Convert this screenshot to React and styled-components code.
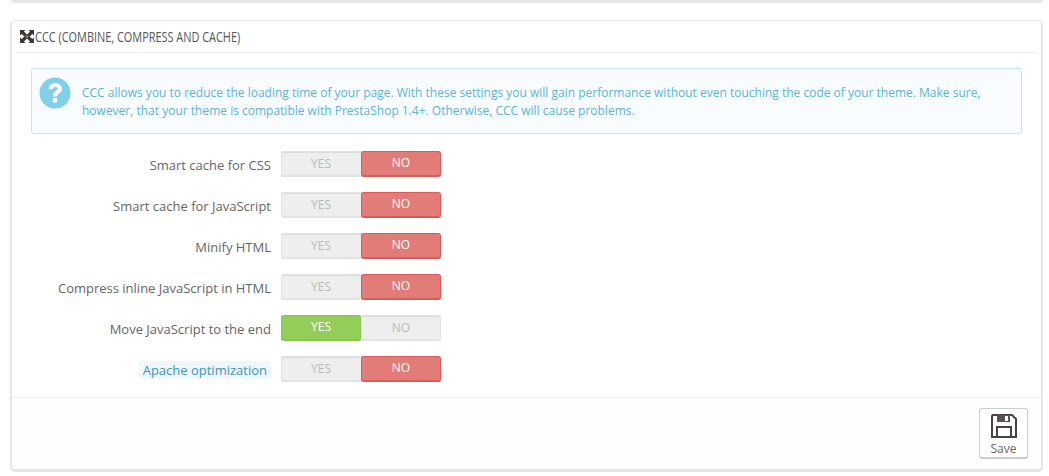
import React from "react";
import styled, { createGlobalStyle } from "styled-components";

const Global = createGlobalStyle`
  html, body {
    margin: 0;
    background: #fff;
    font-family: "Open Sans", "Liberation Sans", sans-serif;
    font-size: 13px;
    color: #666;
  }
`;

const rows = [
  { label: "Smart cache for CSS", on: false },
  { label: "Smart cache for JavaScript", on: false },
  { label: "Minify HTML", on: false },
  { label: "Compress inline JavaScript in HTML", on: false },
  { label: "Move JavaScript to the end", on: true },
  { label: "Apache optimization", on: false, hint: true },
];

const App = () => {
  return (
    <Page>
      <Global />
      <PrevPanel />
      <Panel>
        <Heading>
          <svg width="14" height="13" viewBox="0 0 14 13">
            <path d="M0 0h5.500L4 1.600 7 4.600 10 1.600 8.500 0H14v5.500L12.400 4 9.500 6.500 12.400 9 14 7.500V13H8.500L10 11.400 7 8.400 4 11.400 5.500 13H0V7.500L1.600 9 4.500 6.500 1.600 4 0 5.500z" fill="#3f3835" />
            <path d="M5.500 5.200h3v2.600h-3z" fill="#7d7067" />
          </svg>
          <HeadingText>CCC (COMBINE, COMPRESS AND CACHE)</HeadingText>
        </Heading>
        <Alert>
          <AlertIcon viewBox="0 0 32 32">
            <circle cx="16" cy="16" r="15.500" fill="#81cfe8" />
            <path d="M9.500 12.200c.3-3.800 3-6 6.900-6 3.900 0 6.600 2.300 6.600 5.500 0 2.400-1.300 3.600-2.900 4.700-1.300.9-1.900 1.500-1.900 3h-4.300c-.1-2.600.8-3.900 2.500-5.100 1.300-.9 2.100-1.500 2.100-2.500 0-1.100-.9-1.800-2.100-1.800-1.400 0-2.300.9-2.500 2.300z" fill="#fff" />
            <rect x="13.800" y="21" width="4.300" height="4.500" fill="#fff" />
          </AlertIcon>
          <AlertText>
            CCC allows you to reduce the loading time of your page. With these settings you will gain performance without even touching the code of your theme. Make sure, however, that your theme is compatible with PrestaShop 1.4+. Otherwise, CCC will cause problems.
          </AlertText>
        </Alert>
        <Form>
          {rows.map((row) => (
            <Row key={row.label}>
              <LabelCell>
                <Label $hint={row.hint}>{row.label}</Label>
              </LabelCell>
              <Toggle>
                <Option $active={row.on} $tone="yes">YES</Option>
                <Option $active={!row.on} $tone="no">NO</Option>
              </Toggle>
            </Row>
          ))}
        </Form>
        <Footer>
          <SaveButton>
            <svg width="26" height="24" viewBox="0 0 26 24">
              <path d="M2 1h19l4 4v18H1V2z" fill="none" stroke="#4a4240" strokeWidth="2" />
              <rect x="6" y="1" width="13" height="7" fill="#5a5250" />
              <rect x="14" y="2" width="3" height="5" fill="#fff" />
              <rect x="6" y="13" width="14" height="10" fill="none" stroke="#4a4240" strokeWidth="2" />
            </svg>
            <span>Save</span>
          </SaveButton>
        </Footer>
      </Panel>
    </Page>
  );
};

export default App;

const Page = styled.div`
  width: 1049px;
  height: 476px;
  overflow: hidden;
  padding: 0 6px 0 10px;
  box-sizing: border-box;
`;
const PrevPanel = styled.div`
  height: 3px;
  margin: 0 0 17px 1px;
  background: #e6e6e6;
  border-radius: 0 0 5px 5px;
`;
const Panel = styled.div`
  height: 452px;
  box-sizing: border-box;
  border: 2px solid #e6e6e6;
  border-bottom-width: 3px;
  border-top-width: 1px;
  border-radius: 5px;
  display: flex;
  flex-direction: column;
`;
const Heading = styled.div`
  height: 31px;
  margin: 0 4px;
  padding-left: 4px;
  display: flex;
  align-items: center;
  gap: 1px;
  border-bottom: 1px solid #eee;
  font-size: 14px;
  color: #555;
`;
const HeadingText = styled.span`
  display: inline-block;
  font-weight: 400;
  transform: scaleX(0.78);
  transform-origin: left center;
  white-space: nowrap;
`;
const Alert = styled.div`
  margin: 15px 19px 0 19px;
  height: 66px;
  box-sizing: border-box;
  border: 1px solid #c0e7f2;
  border-radius: 3px;
  background: #f8fcfe;
  display: flex;
  align-items: center;
  padding: 0 20px 0 7px;
  gap: 11px;
`;
const AlertIcon = styled.svg`
  width: 32px;
  height: 32px;
  flex: none;
  margin-top: -16px;
`;
const AlertText = styled.div`
  color: #5db3d8;
  font-size: 12px;
  line-height: 18px;
  margin-top: 1px;
`;
const Form = styled.div`
  margin-top: 17px;
  display: flex;
  flex-direction: column;
  gap: 15px;
`;
const Row = styled.div`
  display: flex;
  align-items: center;
  height: 26px;
`;
const LabelCell = styled.div`
  width: 259px;
  padding-top: 1px;
  text-align: right;
  margin-right: 10px;
`;
const Label = styled.span`
  padding: 0 4px;
  white-space: nowrap;
  border-radius: 3px;
  ${(p) => p.$hint && "background: #eff7fb; color: #3f93b8;"}
  ${(p) => !p.$hint && "padding-right: 0;"}
`;
const Toggle = styled.div`
  display: flex;
  width: 160px;
  height: 26px;
  border-radius: 3px;
  background: #eee;
  box-shadow: inset 0 0 0 1px #e2e2e2, inset 0 2px 0 #dcdcdc, inset 0 -2px 0 #e4e4e4;
`;
const Option = styled.div`
  width: 80px;
  box-sizing: border-box;
  display: flex;
  align-items: center;
  justify-content: center;
  font-size: 12px;
  font-weight: ${(p) => (p.$active ? 500 : 400)};
  color: ${(p) => (p.$active ? "#fff" : "#bbb")};
  border-radius: 3px;
  padding-bottom: 2px;
  ${(p) =>
    p.$active &&
    (p.$tone === "no"
      ? "background: #e27c79; border: 1px solid #dc5b57; border-bottom-width: 2px;"
      : "background: #93ce5a; border: 1px solid #86c64a; border-bottom-width: 2px;")}
`;
const Footer = styled.div`
  margin-top: 15px;
  flex: 1;
  border-top: 1px solid #eee;
  background: #fcfdfe;
  display: flex;
  justify-content: flex-end;
  align-items: flex-start;
  padding: 10px 13px 0 0;
  border-radius: 0 0 5px 5px;
`;
const SaveButton = styled.div`
  width: 49px;
  height: 51px;
  box-sizing: border-box;
  border: 1px solid #ccc;
  border-bottom-width: 2px;
  border-radius: 3px;
  background: #fff;
  display: flex;
  flex-direction: column;
  align-items: center;
  padding-top: 5px;
  font-size: 12px;
  line-height: 14px;
  color: #666;
  gap: 4px;
`;
